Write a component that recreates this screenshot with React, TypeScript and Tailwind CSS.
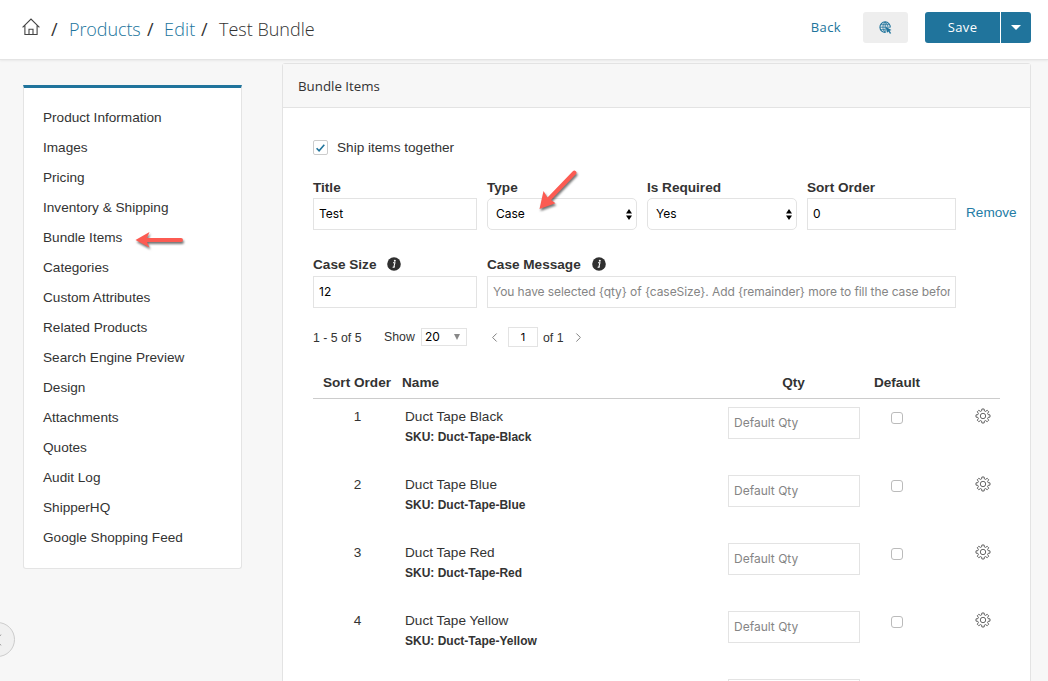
import { useState } from "react";
import { ChevronLeft, ChevronRight } from "lucide-react";
import clsx from "clsx";

const NAV_ITEMS = [
  "Product Information",
  "Images",
  "Pricing",
  "Inventory & Shipping",
  "Bundle Items",
  "Categories",
  "Custom Attributes",
  "Related Products",
  "Search Engine Preview",
  "Design",
  "Attachments",
  "Quotes",
  "Audit Log",
  "ShipperHQ",
  "Google Shopping Feed",
];

const PRODUCTS = [
  { order: 1, name: "Duct Tape Black", sku: "Duct-Tape-Black" },
  { order: 2, name: "Duct Tape Blue", sku: "Duct-Tape-Blue" },
  { order: 3, name: "Duct Tape Red", sku: "Duct-Tape-Red" },
  { order: 4, name: "Duct Tape Yellow", sku: "Duct-Tape-Yellow" },
];

const inputClass =
  "block h-8 w-full border border-[#e3e3e3] bg-white px-[5px] pb-[2px] font-['Inter',sans-serif] text-[12px] text-black outline-none placeholder:text-[#858585]";

// outline of an 8-tooth gear centred on 8,8
const GEAR_POINTS = Array.from({ length: 8 }, (_, tooth) =>
  [
    [-15, 5.3],
    [-9, 7.1],
    [9, 7.1],
    [15, 5.3],
  ].map(([offset, radius]) => {
    const angle = ((tooth * 45 + offset) * Math.PI) / 180;
    return `${(8 + radius * Math.cos(angle)).toFixed(2)},${(8 + radius * Math.sin(angle)).toFixed(2)}`;
  })
)
  .flat()
  .join(" ");

function GearIcon() {
  return (
    <svg width="16" height="16" viewBox="0 0 16 16" fill="none" stroke="#555" strokeLinejoin="round">
      <polygon points={GEAR_POINTS} strokeWidth="0.9" />
      <circle cx="8" cy="8" r="2.7" strokeWidth="0.9" />
    </svg>
  );
}

function HomeIcon() {
  return (
    <svg width="18" height="18" viewBox="0 0 18 18" fill="none" stroke="#444" strokeWidth="1.1">
      <path d="M0.6 9.3 9 1l8.4 8.3M2.9 7.3v9.2h12.2V7.3M7 16.3v-5.1h4v5.1" />
    </svg>
  );
}

function GlobeIcon() {
  return (
    <svg width="13" height="13" viewBox="0 0 13 13" fill="none" stroke="#20749c">
      <path d="M6.6 11.3A5.2 5.2 0 1 1 11.3 6.4" strokeWidth="1.1" />
      <path
        d="M6.2 1v10.2M1 6.2h10.2M1.8 3.7h8.8M1.8 8.7h4.4M6.2 1C3.2 3.2 3.2 9.2 6.2 11.2M6.2 1c1.6 1.2 2.4 2.8 2.5 4.6"
        strokeWidth="0.8"
      />
      <path d="M6.6 5.8 12.5 9.1 10.6 9.7 12.2 12.2 10.9 12.8 9.5 10.5 8 11.8Z" fill="#20749c" stroke="none" />
    </svg>
  );
}

function InfoIcon() {
  return (
    <svg className="mb-[2px]" width="14" height="14" viewBox="0 0 14 14" fill="#303030">
      <circle cx="7" cy="7" r="6.8" />
      <circle cx="7.8" cy="3.8" r="1" fill="#fff" />
      <path d="M6 5.8h1.9L6.9 9.9h1M5.6 10.2h1.6" stroke="#fff" strokeWidth="1.1" fill="none" />
    </svg>
  );
}

function Label({ children, info }: { children: string; info?: boolean }) {
  return (
    <div className="flex h-[22px] items-center gap-[11px] pt-[2px] font-bold">
      {children}
      {info && <InfoIcon />}
    </div>
  );
}

function SelectBox({ value }: { value: string }) {
  return (
    <button className="flex h-8 w-full items-center justify-between rounded-[5px] border border-[#e3e3e3] bg-white pr-1 pl-2 font-['Inter',sans-serif] text-[12px] text-black">
      {value}
      <svg width="6" height="11" viewBox="0 0 6 11" fill="#000">
        <path d="M0 4.5 3 0l3 4.5zM0 6.5h6L3 11z" />
      </svg>
    </button>
  );
}

function Header() {
  return (
    <header className="flex h-[60px] items-center justify-between border-b border-[#e4e4e4] bg-white pr-[17px] pb-1 pl-[22px] font-['Open_Sans',sans-serif] shadow-[0_1px_2px_rgba(0,0,0,0.06)]">
      <nav className="flex items-center pt-1 text-[18px] text-[#333]">
        <div className="mb-[5px]">
          <HomeIcon />
        </div>
        <span className="ml-[11px] w-[18px]">/</span>
        <a className="w-[78px] font-light tracking-[-0.1px] text-[#20749c]">Products</a>
        <span className="w-[17px]">/</span>
        <a className="w-[37px] font-light tracking-[0.2px] text-[#20749c]">Edit</a>
        <span className="w-[18px]">/</span>
        <span className="font-light">Test Bundle</span>
      </nav>
      <div className="flex items-center text-[13px] font-medium">
        <a className="mr-[22px] pt-px tracking-[0.4px] text-[#20749c]">Back</a>
        <button className="mr-[17px] flex h-[31px] w-[45px] items-center justify-center rounded-[3px] bg-[#eee]">
          <GlobeIcon />
        </button>
        <button className="h-[31px] w-[75px] rounded-l-[3px] bg-[#20749c] pt-px tracking-[0.4px] text-white">
          Save
        </button>
        <button className="ml-px flex h-[31px] w-[30px] items-center justify-center rounded-r-[3px] bg-[#20749c]">
          <svg width="10" height="5" viewBox="0 0 10 5" fill="#fff">
            <path d="M0 0h10L5 5z" />
          </svg>
        </button>
      </div>
    </header>
  );
}

function Sidebar() {
  return (
    <aside className="mt-[25px] h-[484px] w-[219px] rounded-b-[3px] border border-t-[3px] border-[#e4e4e4] border-t-[#20749c] bg-white pt-[15px] pl-[19px]">
      {NAV_ITEMS.map((item) => (
        <div key={item} className="flex h-[30px] items-center">
          {item}
          {item === "Bundle Items" && (
            <svg
              className="mt-[3px] ml-[13px] overflow-visible drop-shadow-[1px_2px_1px_rgba(0,0,0,0.55)]"
              width="48"
              height="16"
              viewBox="0 0 48 16"
              fill="#fc5b52"
            >
              <path d="M0.5 8 14.5 0l-2.5 6H46a2 2 0 0 1 0 4H12l2.5 5.5z" />
            </svg>
          )}
        </div>
      ))}
    </aside>
  );
}

function Pager() {
  return (
    <div className="mt-[19px] flex h-5 items-center text-[12.3px]">
      <span className="w-[71px] pt-[2px]">1 - 5 of 5</span>
      <span className="w-[37px]">Show</span>
      <div className="flex h-[18px] w-[46px] items-center justify-between border border-[#e3e3e3] pr-[6px] pl-[3px] font-['Inter',sans-serif] text-[12px] text-black">
        20
        <svg width="6" height="6" viewBox="0 0 6 6" fill="#888">
          <path d="M0 0h6L3 6z" />
        </svg>
      </div>
      <ChevronLeft className="ml-5 h-[15px] w-[15px] text-[#777]" strokeWidth={1.5} />
      <div className="ml-[6px] flex h-5 w-[30px] items-center justify-center border border-[#e3e3e3] pt-px font-['Inter',sans-serif] text-[11px] text-black">
        1
      </div>
      <span className="ml-[5px] w-[22px] pt-[2px] whitespace-nowrap">of 1</span>
      <ChevronRight className="ml-[6px] h-[15px] w-[15px] text-[#777]" strokeWidth={1.5} />
    </div>
  );
}

function ProductTable() {
  return (
    <div className="w-[687px]">
      <div className="mt-[19px] grid h-[33px] grid-cols-[89px_313px_157px_50px_78px] items-center border-b border-[#ccc] pt-[2px] font-bold">
        <span className="pl-[10px] whitespace-nowrap">Sort Order</span>
        <span>Name</span>
        <span className="text-center">Qty</span>
        <span className="text-center">Default</span>
      </div>
      {PRODUCTS.map((product) => (
        <div key={product.order} className="grid h-[68px] grid-cols-[92px_323px_132px_74px_66px] pt-2">
          <span className="pr-[3px] text-center leading-5">{product.order}</span>
          <div className="leading-5">
            <div>{product.name}</div>
            <div className="text-[12px] font-bold">SKU: {product.sku}</div>
          </div>
          <input className={inputClass} placeholder="Default Qty" />
          <div className="pt-[5px] pl-[31px]">
            <div className="h-3 w-3 rounded-[3px] border border-[#bbb] bg-white" />
          </div>
          <div className="flex justify-end pt-px pr-[9px]">
            <GearIcon />
          </div>
        </div>
      ))}
      <div className="pt-2 pl-[415px]">
        <div className="h-8 w-[132px] border border-[#e3e3e3]" />
      </div>
    </div>
  );
}

function BundlePanel() {
  const [shipTogether, setShipTogether] = useState(true);

  return (
    <section className="mt-[3px] ml-10 h-[700px] w-[749px] rounded-t-[3px] border border-[#e3e3e3] bg-white">
      <h2 className="flex h-11 items-center border-b border-[#e3e3e3] bg-[#f7f7f7] pt-[2px] pl-[15px] font-['Open_Sans',sans-serif] text-[13.3px]">
        Bundle Items
      </h2>
      <div className="pt-8 pl-[30px]">
        <div className="flex h-4 items-center" onClick={() => setShipTogether(!shipTogether)}>
          <span className="mb-px flex h-[15px] w-[15px] items-center justify-center rounded-[2px] border border-[#ccc]">
            <svg
              className={clsx(!shipTogether && "invisible")}
              width="9"
              height="8"
              viewBox="0 0 9 8"
              fill="none"
              stroke="#20749c"
              strokeWidth="1.6"
            >
              <path d="m.6 4.2 2.5 2.6L8.3.8" />
            </svg>
          </span>
          <span className="ml-[9px]">Ship items together</span>
        </div>

        <div className="relative mt-[20px] grid grid-cols-[164px_150px_150px_149px_60px] gap-x-[10px]">
          <div>
            <Label>Title</Label>
            <input className={inputClass} defaultValue="Test" />
          </div>
          <div>
            <Label>Type</Label>
            <SelectBox value="Case" />
          </div>
          <div>
            <Label>Is Required</Label>
            <SelectBox value="Yes" />
          </div>
          <div>
            <Label>Sort Order</Label>
            <input className={inputClass} defaultValue="0" />
          </div>
          <a className="pt-[27px] text-[#247ca5]">Remove</a>
          {/* callout pointing at the type select */}
          <svg
            className="absolute top-[-6px] left-[226px] overflow-visible drop-shadow-[1px_2px_1px_rgba(0,0,0,0.55)]"
            width="38"
            height="40"
            viewBox="0 0 38 40"
            fill="#fc5b52"
          >
            <path d="M.5 39 4.5 21l4 6.5L33.8 1.2a2 2 0 0 1 3 3L12 30l4.5 3.2z" />
          </svg>
        </div>

        <div className="mt-[23px] grid grid-cols-[164px_469px] gap-x-[10px]">
          <div>
            <Label info>Case Size</Label>
            <input className={clsx(inputClass, "mt-px")} defaultValue="12" />
          </div>
          <div>
            <Label info>Case Message</Label>
            <input
              className={clsx(inputClass, "mt-px tracking-[-0.07px]")}
              placeholder="You have selected {qty} of {caseSize}. Add {remainder} more to fill the case before adding to cart."
            />
          </div>
        </div>

        <Pager />
        <ProductTable />
      </div>
    </section>
  );
}

export default function App() {
  return (
    <div className="relative h-[681px] w-[1048px] overflow-hidden bg-[#f7f7f7] font-['Liberation_Sans',Arial,sans-serif] text-[13.6px] text-[#333]">
      <Header />
      <main className="flex items-start pl-[23px]">
        <Sidebar />
        <BundlePanel />
      </main>
      <button className="absolute top-[622px] left-[-20px] flex h-[35px] w-[35px] items-center justify-center rounded-full border border-[#ccc] bg-[#f0f0f0]">
        <ChevronLeft className="h-5 w-5 text-[#666]" strokeWidth={1.2} />
      </button>
    </div>
  );
}
